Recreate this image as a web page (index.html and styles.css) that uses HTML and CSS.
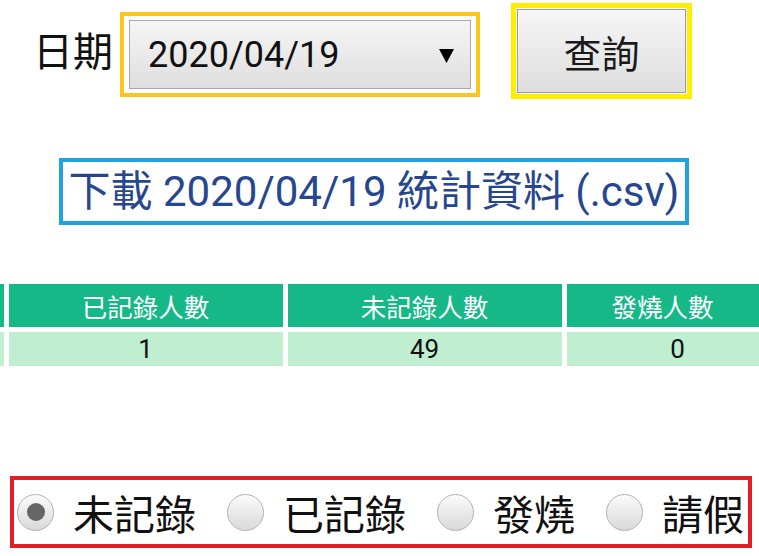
FILE: index.html
```html
<!DOCTYPE html>
<html lang="zh-Hant">
<head>
<meta charset="utf-8">
<link rel="stylesheet" href="styles.css">
</head>
<body>
<div class="top">
  <span class="date-label">日期</span>
  <div class="sel-wrap">
    <div class="select">
      <span class="sel-text">2020/04/19</span>
      <svg class="arrow" width="15" height="14" viewBox="0 0 15 14"><polygon points="0,0 15,0 7.5,14" fill="#000"/></svg>
    </div>
  </div>
  <div class="btn-wrap"><button class="btn">查詢</button></div>
</div>
<div class="dl-row"><a class="dl">下載 2020/04/19 統計資料 (.csv)</a></div>
<div class="stats">
  <div class="th"></div>
  <div class="th">已記錄人數</div>
  <div class="th">未記錄人數</div>
  <div class="th last">發燒人數</div>
  <div class="td"></div>
  <div class="td">1</div>
  <div class="td">49</div>
  <div class="td">0</div>
</div>
<div class="radios">
  <span class="radio checked"></span><span class="rlabel">未記錄</span>
  <span class="radio"></span><span class="rlabel">已記錄</span>
  <span class="radio"></span><span class="rlabel">發燒</span>
  <span class="radio"></span><span class="rlabel">請假</span>
</div>
</body>
</html>
```
FILE: styles.css
```css
html, body {
  margin: 0;
  padding: 0;
  background: #fff;
  overflow: hidden;
}
body {
  font-family: "Roboto", "Noto Sans CJK TC", sans-serif;
  color: #111;
  width: 759px;
  height: 556px;
}
.top {
  display: flex;
  align-items: flex-start;
  padding-left: 33px;
}
.date-label {
  font-size: 40px;
  line-height: 40px;
  margin-top: 29px;
  font-family: "Noto Sans CJK TC", sans-serif;
}
.sel-wrap {
  margin-left: 7px;
  margin-top: 12px;
  border: 4px solid #fcc61c;
  padding: 4px 5px;
}
.select {
  box-sizing: border-box;
  width: 342px;
  height: 69px;
  border: 1px solid #a9a9a9;
  background: linear-gradient(#f6f6f6, #dedede);
  display: flex;
  align-items: center;
  justify-content: space-between;
  padding: 0 16px 0 18px;
}
.sel-text {
  font-size: 36px;
  color: #111;
}
.arrow {
  display: block;
  margin-top: 2px;
}
.btn-wrap {
  margin-left: 31px;
  margin-top: 3px;
  border: 5px solid #ffee00;
  padding: 1px;
}
.btn {
  display: block;
  box-sizing: border-box;
  width: 169px;
  height: 84px;
  border: 1px solid #9c9c9c;
  background: linear-gradient(#f6f6f6, #dedede);
  font-family: "Noto Sans CJK TC", sans-serif;
  font-size: 38px;
  color: #1a1a1a;
  padding: 0;
}
.dl-row {
  display: flex;
  justify-content: center;
  padding-right: 11px;
  margin-top: 59px;
}
.dl {
  border: 4px solid #1ea3e0;
  padding: 0 6px;
  font-size: 42px;
  line-height: 59px;
  color: #26478f;
  white-space: nowrap;
}
.stats {
  display: grid;
  grid-template-columns: 3.5px 274px 274px 222px;
  grid-template-rows: 43px 34px;
  column-gap: 5px;
  row-gap: 5px;
  margin-top: 59px;
  width: 759px;
  overflow: hidden;
}
.th, .td {
  display: flex;
  align-items: center;
  justify-content: center;
  white-space: nowrap;
  overflow: hidden;
}
.th {
  background: #15b886;
  color: #fff;
  font-size: 25.5px;
  font-family: "Noto Sans CJK TC", sans-serif;
}
.th.last {
  padding-right: 30px;
}
.td {
  background: #bfeed1;
  color: #111;
  font-size: 26px;
}
.radios {
  box-sizing: border-box;
  margin-top: 110px;
  margin-left: 10px;
  width: 742px;
  height: 72px;
  border: 4px solid #e21f27;
  display: flex;
  align-items: center;
  padding-left: 3px;
}
.radio {
  box-sizing: border-box;
  width: 37px;
  height: 37px;
  border-radius: 50%;
  border: 1px solid #b3b3b3;
  background: linear-gradient(#fbfbfb, #d9d9d9);
  display: flex;
  align-items: center;
  justify-content: center;
  margin-right: 19px;
  flex: none;
}
.radio.checked::after {
  content: "";
  width: 18px;
  height: 18px;
  border-radius: 50%;
  background: #666;
}
.rlabel {
  font-family: "Noto Sans CJK TC", sans-serif;
  font-size: 41px;
  line-height: 1;
  color: #111;
  margin-right: 31px;
  white-space: nowrap;
  flex: none;
}
```
